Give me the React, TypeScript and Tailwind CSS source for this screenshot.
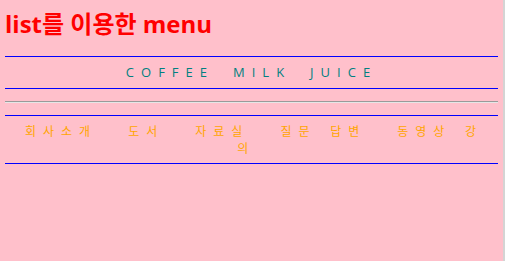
import React from 'react';

const drinks = ['COFFEE', 'MILK', 'JUICE'];

export default function App() {
  return (
    <div className="flex min-h-screen bg-[#ffc0cb] font-['Open_Sans','Noto_Sans_CJK_KR',sans-serif]">
      <div className="flex-1 px-[5px]">
        {/* Title */}
        <h1 className="pt-[8px] text-[24px] leading-[32px] font-bold text-[#ff0000]">list를 이용한 menu</h1>

        {/* Drink menu */}
        <ul className="mt-[16px] flex justify-center gap-[19px] border-y border-[#0000ff] py-[6px] text-[13px] leading-[19px] tracking-[7px] text-[#008080]">
          {drinks.map((d) => (
            <li key={d}>{d}</li>
          ))}
        </ul>

        {/* Divider */}
        <div className="mt-[12px] border-t border-b border-t-[#9a9a9a] border-b-[#e6e6e6]" />

        {/* Site menu */}
        <ul className="mt-[12px] flex gap-[31px] border-y border-[#0000ff] pt-[6px] pb-[7px] pl-[20px] font-['Noto_Sans_CJK_KR',sans-serif] text-[12px] leading-[17px] tracking-[7px] [word-spacing:4px] text-[#ffa500]">
          <li>회사소개</li>
          <li>도서</li>
          <li>
            <span className="block">자료실</span>
            <span className="block pl-[42px] tracking-normal">의</span>
          </li>
          <li>질문 답변</li>
          <li>동영상 강</li>
        </ul>
      </div>
      <div className="w-[2px] bg-[#d4d4d4]" />
    </div>
  );
}
